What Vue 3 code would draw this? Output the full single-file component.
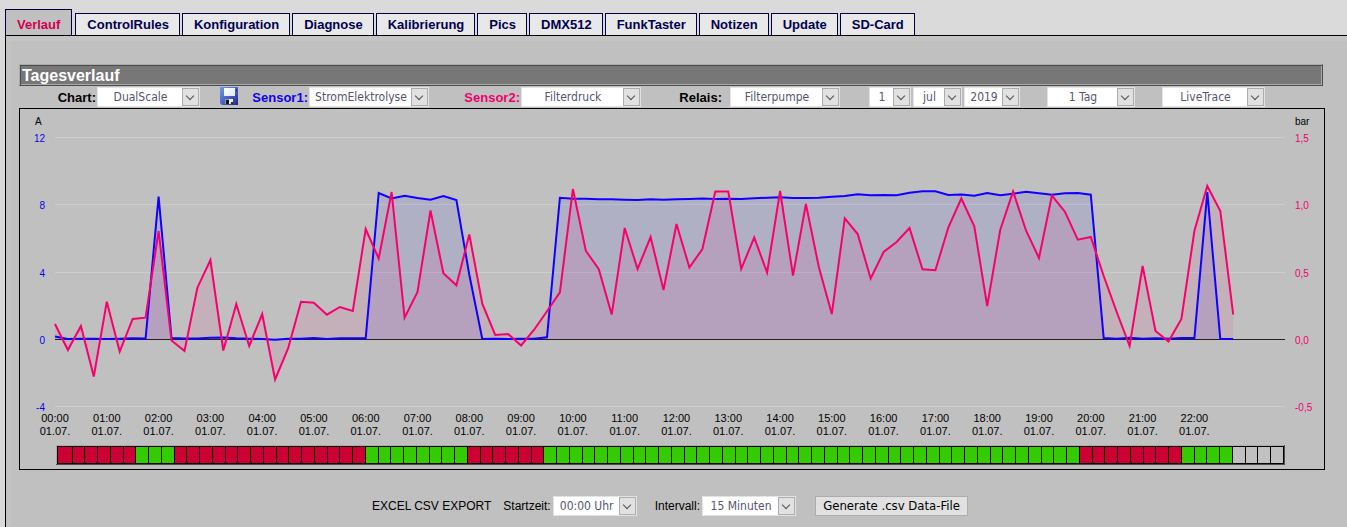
<script setup>
import { ref } from 'vue'

const tabs = ['Verlauf', 'ControlRules', 'Konfiguration', 'Diagnose', 'Kalibrierung', 'Pics', 'DMX512', 'FunkTaster', 'Notizen', 'Update', 'SD-Card']
const activeTab = ref('Verlauf')

// Plot area in chart coordinates; one sample every 15 minutes.
const left = 55
const right = 1285
const zero = 339.5
const step = (right - left) / 95

const current = [
  336.5, 339, 338.7, 338.7, 339, 338.7, 338.3, 338.5, 196.5, 338, 338.5, 338.5, 337.7, 337.5, 338.3, 338.7,
  339, 339.7, 338.7, 338.8, 338, 339, 338.3, 338.3, 338.3, 193, 198.5, 195.7, 198, 199.7, 196, 200,
  274.7, 339, 338.7, 339, 338.7, 338.7, 337.3, 197.7, 198.7, 198.8, 199.3, 199.3, 199.7, 200, 199.3, 199.8,
  199.3, 199, 198.5, 199, 198.7, 199, 198.3, 197.7, 197.3, 198, 198, 197.7, 196.7, 196, 194.3, 195.3,
  195, 195.3, 192.7, 191.3, 191.3, 195, 194.5, 195.7, 193, 195.3, 193.8, 191.7, 193.3, 194.7, 193.3, 193,
  194.7, 338, 338.7, 337.7, 338.7, 338.3, 338.7, 338, 338, 192, 339, 339
]
const pressure = [
  324, 350, 326, 376.5, 301.7, 351.5, 319, 317.7, 231, 340.5, 351, 287.7, 260, 350.5, 304, 346,
  314, 379.5, 348.5, 301.7, 302.7, 314.7, 307, 311, 229, 258.5, 192, 317.7, 292, 210.5, 273.3, 285.3,
  234.5, 303.7, 335, 334, 345.5, 329.7, 311.3, 292.3, 189, 250.7, 269.3, 314.5, 228, 269, 237, 290,
  224, 267.5, 249, 191.5, 191.5, 269, 237.5, 272.5, 191, 275.5, 204, 267.3, 314, 218.3, 234, 278.5,
  252, 242, 228, 269.3, 270.3, 227.3, 198.5, 226.3, 306, 230, 191.5, 230.7, 258, 195.5, 211.7, 239.7,
  237, 276, 312, 346, 266, 331, 341.5, 319, 231, 186, 211, 314.5
]

const line = (ys) => ys.map((y, i) => `${(left + i * step).toFixed(1)},${y}`).join(' ')
const area = (ys) => `${left},${zero} ${line(ys)} ${(left + (ys.length - 1) * step).toFixed(1)},${zero}`

const rows = [
  { y: 137.5, amp: '12', bar: '1,5' },
  { y: 204.5, amp: '8', bar: '1,0' },
  { y: 272.5, amp: '4', bar: '0,5' },
  { y: 339.5, amp: '0', bar: '0,0' },
  { y: 406.5, amp: '-4', bar: '-0,5' }
]
const hours = Array.from({ length: 23 }, (_, h) => ({
  x: left + h * 4 * step,
  label: `${String(h).padStart(2, '0')}:00`
}))

// Relay states as runs of equal 15-minute cells.
const runs = [['off', 6], ['on', 3], ['off', 15], ['on', 8], ['off', 6], ['on', 42], ['off', 8], ['on', 4], ['none', 4]]
const cells = runs.flatMap(([state, n]) => Array(n).fill(state)).map((state, i) => {
  const x = i === 0 ? 58 : Math.round(72.5 + (i - 1) * 12.75)
  return { state, x, width: Math.round(72.5 + i * 12.75) - 1 - x }
})
</script>

<template>
  <div class="page">
    <nav class="tabs">
      <a v-for="t in tabs" :key="t" href="#" :class="{ active: t === activeTab }" @click.prevent="activeTab = t">{{ t }}</a>
    </nav>
    <main class="panel">
      <h1>Tagesverlauf</h1>
      <form class="toolbar" @submit.prevent>
        <div class="group">
          <label for="chart">Chart:</label>
          <span class="select w-chart"><select id="chart"><option>DualScale</option></select></span>
        </div>
        <div class="group">
          <button class="save" type="button" aria-label="Speichern">
            <svg viewBox="0 0 18 18" width="18" height="18">
              <defs>
                <linearGradient id="disk" x1="0" y1="0" x2="1" y2="1">
                  <stop offset="0" stop-color="#6f9be8" /><stop offset=".5" stop-color="#4a62c8" /><stop offset="1" stop-color="#27277c" />
                </linearGradient>
                <linearGradient id="label" x1="0" y1="0" x2="1" y2="1">
                  <stop offset="0" stop-color="#fff" /><stop offset="1" stop-color="#dbe8fa" />
                </linearGradient>
              </defs>
              <path d="M0 0H18V18H2L0 16Z" fill="url(#disk)" />
              <path d="M4 1H15V9H4Z" fill="url(#label)" />
              <path d="M16 2h1v2h-1z" fill="#1b2360" />
              <path d="M5 12H13V17H5Z" fill="#8f9a9a" />
              <path d="M6 13H9V17H6Z" fill="#101a18" />
              <path d="M9 12H13V15L10 17H9Z" fill="#e3ecd9" />
              <path d="M11 15h2v2h-2z" fill="#29332f" />
            </svg>
          </button>
        </div>
        <div class="group">
          <label class="blue" for="s1">Sensor1:</label>
          <span class="select w-sensor"><select id="s1"><option>StromElektrolyse</option></select></span>
        </div>
        <div class="group">
          <label class="pink" for="s2">Sensor2:</label>
          <span class="select w-sensor"><select id="s2"><option>Filterdruck</option></select></span>
        </div>
        <div class="group spaced">
          <label for="relay">Relais:</label>
          <span class="select w-relay"><select id="relay"><option>Filterpumpe</option></select></span>
        </div>
        <div class="group date">
          <span class="select w-day"><select aria-label="Tag"><option>1</option></select></span>
          <span class="select w-month"><select aria-label="Monat"><option>jul</option></select></span>
          <span class="select w-year"><select aria-label="Jahr"><option>2019</option></select></span>
        </div>
        <div class="group">
          <span class="select w-span"><select aria-label="Zeitraum"><option>1 Tag</option></select></span>
        </div>
        <div class="group">
          <span class="select w-chart"><select aria-label="Modus"><option>LiveTrace</option></select></span>
        </div>
      </form>

      <section class="chart">
        <svg viewBox="20 109 1304 360" role="img" aria-label="Tagesverlauf">
          <line v-for="r in rows" :key="r.y" :x1="left" :x2="right" :y1="r.y" :y2="r.y" class="grid" />
          <polygon :points="area(current)" class="fill-blue" />
          <polygon :points="area(pressure)" class="fill-pink" />
          <line :x1="left" :x2="right" :y1="zero" :y2="zero" class="zero" />
          <polyline :points="line(current)" class="line-blue" />
          <polyline :points="line(pressure)" class="line-pink" />

          <text x="35" y="125">A</text>
          <text x="1295" y="125">bar</text>
          <g v-for="r in rows" :key="r.amp">
            <text x="45" :y="r.y + 4" text-anchor="end" class="t-blue">{{ r.amp }}</text>
            <text x="1295" :y="r.y + 4" class="t-pink">{{ r.bar }}</text>
          </g>
          <g v-for="h in hours" :key="h.label" class="time" text-anchor="middle">
            <text :x="h.x" y="422">{{ h.label }}</text>
            <text :x="h.x" y="435">01.07.</text>
          </g>

          <g shape-rendering="crispEdges">
            <rect x="56" y="445" width="1229" height="20" class="edge-light" />
            <rect x="56" y="464" width="1229" height="1" class="edge-dark" />
            <rect x="1284" y="445" width="1" height="20" class="edge-dark" />
            <rect x="57" y="446" width="1227" height="18" />
            <rect v-for="c in cells" :key="c.x" :x="c.x" y="447" :width="c.width" height="16" :class="c.state" />
          </g>
        </svg>
      </section>

      <form class="export" @submit.prevent>
        <span class="title">EXCEL CSV EXPORT</span>
        <label for="start">Startzeit:</label>
        <span class="select w-start"><select id="start"><option>00:00 Uhr</option></select></span>
        <label class="second" for="interval">Intervall:</label>
        <span class="select w-interval"><select id="interval"><option>15 Minuten</option></select></span>
        <button class="generate" type="submit">Generate .csv Data-File</button>
      </form>
    </main>
  </div>
</template>

<style>
html { background: #dadada; }
body { margin: 0; overflow-x: hidden; }
</style>

<style scoped>
.page {
  display: flex;
  flex-direction: column;
  min-height: 100vh;
  padding: 9px 0 0 5px;
  box-sizing: border-box;
  font-family: "Liberation Sans", Arial, sans-serif;
  color: #000;
  background: #dadada;
}
.tabs {
  display: flex;
  align-items: flex-end;
  gap: 2px;
  height: 27px;
  margin-bottom: -1px;
}
.tabs a {
  box-sizing: border-box;
  height: 23px;
  padding: 0 10px 0 11px;
  border: 1px solid #000040;
  border-bottom-color: #000;
  background: #e8e8e8;
  color: #000050;
  font-size: 13px;
  font-weight: bold;
  line-height: 21px;
  text-decoration: none;
  white-space: nowrap;
}
.tabs a.active {
  height: 27px;
  margin-right: 1px;
  padding: 4px 11px 0;
  border-bottom-color: #c4c4c4;
  background: #c0c0c0;
  color: #d0004f;
}
.panel {
  flex: 1;
  padding: 28px 22px 8px 13px;
  border: solid #000;
  border-width: 1px 0 0 1px;
  background: #c0c0c0;
  box-shadow: inset 5px 5px #c4c4c4;
}
h1 {
  box-sizing: border-box;
  height: 22px;
  margin: 0 2px 1px 0;
  padding: 0 2px;
  border: 1px solid;
  border-color: #aaa #4c4c4c #4c4c4c #aaa;
  background: #777;
  box-shadow: inset 1px 1px #4c4c4c, inset -1px -1px #aaa;
  color: #fff;
  font-size: 16px;
  line-height: 21px;
}
.toolbar {
  display: grid;
  grid-template-columns: 181fr 38fr 191fr 212fr 199fr 180fr 115fr 130fr 60fr;
  height: 21px;
}
.group {
  display: flex;
  justify-content: flex-end;
  align-items: flex-start;
  gap: 1px;
  font-size: 13px;
  font-weight: bold;
  line-height: 21px;
}
.spaced { gap: 8px; }
.date { gap: 2px; }
.blue { color: #1000f0; }
.pink { color: #f0006c; }
.select {
  position: relative;
  display: block;
  height: 20px;
}
.select::before {
  content: "";
  position: absolute;
  top: 1px;
  right: 1px;
  box-sizing: border-box;
  width: 17px;
  height: 18px;
  border: 1px solid #adadad;
  background: #e1e1e1;
  pointer-events: none;
}
.select::after {
  content: "";
  position: absolute;
  top: 6px;
  right: 7px;
  width: 5px;
  height: 5px;
  border: solid #505050;
  border-width: 0 1px 1px 0;
  transform: rotate(45deg);
  pointer-events: none;
}
select {
  display: block;
  box-sizing: border-box;
  width: 100%;
  height: 20px;
  margin: 0;
  padding: 0 16px 0 0;
  border: 1px solid #e3e3e3;
  border-radius: 0;
  appearance: none;
  background: #fff;
  color: #555570;
  font: 12px/18px "DejaVu Sans Condensed", "DejaVu Sans", Tahoma, sans-serif;
  text-align: center;
  text-align-last: center;
}
.w-chart { width: 103px; }
.w-sensor { width: 120px; }
.w-relay { width: 110px; }
.w-day { width: 42px; }
.w-month { width: 49px; }
.w-year { width: 56px; }
.w-span { width: 88px; }
.w-start { width: 84px; }
.w-interval { width: 94px; }
.save {
  display: block;
  padding: 0;
  border: 0;
  background: none;
}
.save svg { display: block; }
.chart {
  border: 1px solid #000;
}
.chart svg {
  display: block;
  width: 100%;
  height: auto;
}
text { font-size: 10px; }
.time text { font-size: 11px; }
.t-blue { fill: #1000f0; }
.t-pink { fill: #f0006c; }
.grid { stroke: #cdcdcd; }
.zero { stroke: #222; }
.fill-blue { fill: #0000ff; fill-opacity: .083; }
.fill-pink { fill: #f0006c; fill-opacity: .083; }
.line-blue, .line-pink { fill: none; stroke-width: 2; }
.line-blue { stroke: #1000ff; }
.line-pink { stroke: #f8006c; }
.edge-light { fill: #aaa; }
.edge-dark { fill: #4c4c4c; }
.on { fill: #3c0; }
.off { fill: #c03; }
.none { fill: #c0c0c0; }
.export {
  display: flex;
  justify-content: center;
  align-items: center;
  height: 20px;
  margin: 26px 4px 0 0;
  font-size: 12px;
}
.title { margin-right: 12px; }
.export label { margin-right: 2px; }
.export .second { margin-left: 18px; }
.generate {
  box-sizing: border-box;
  width: 153px;
  height: 20px;
  margin-left: 19px;
  padding: 0;
  border: 1px solid #adadad;
  background: #e1e1e1;
  color: #000;
  font: 13px/18px "DejaVu Sans Condensed", "DejaVu Sans", Tahoma, sans-serif;
  white-space: nowrap;
}
</style>
